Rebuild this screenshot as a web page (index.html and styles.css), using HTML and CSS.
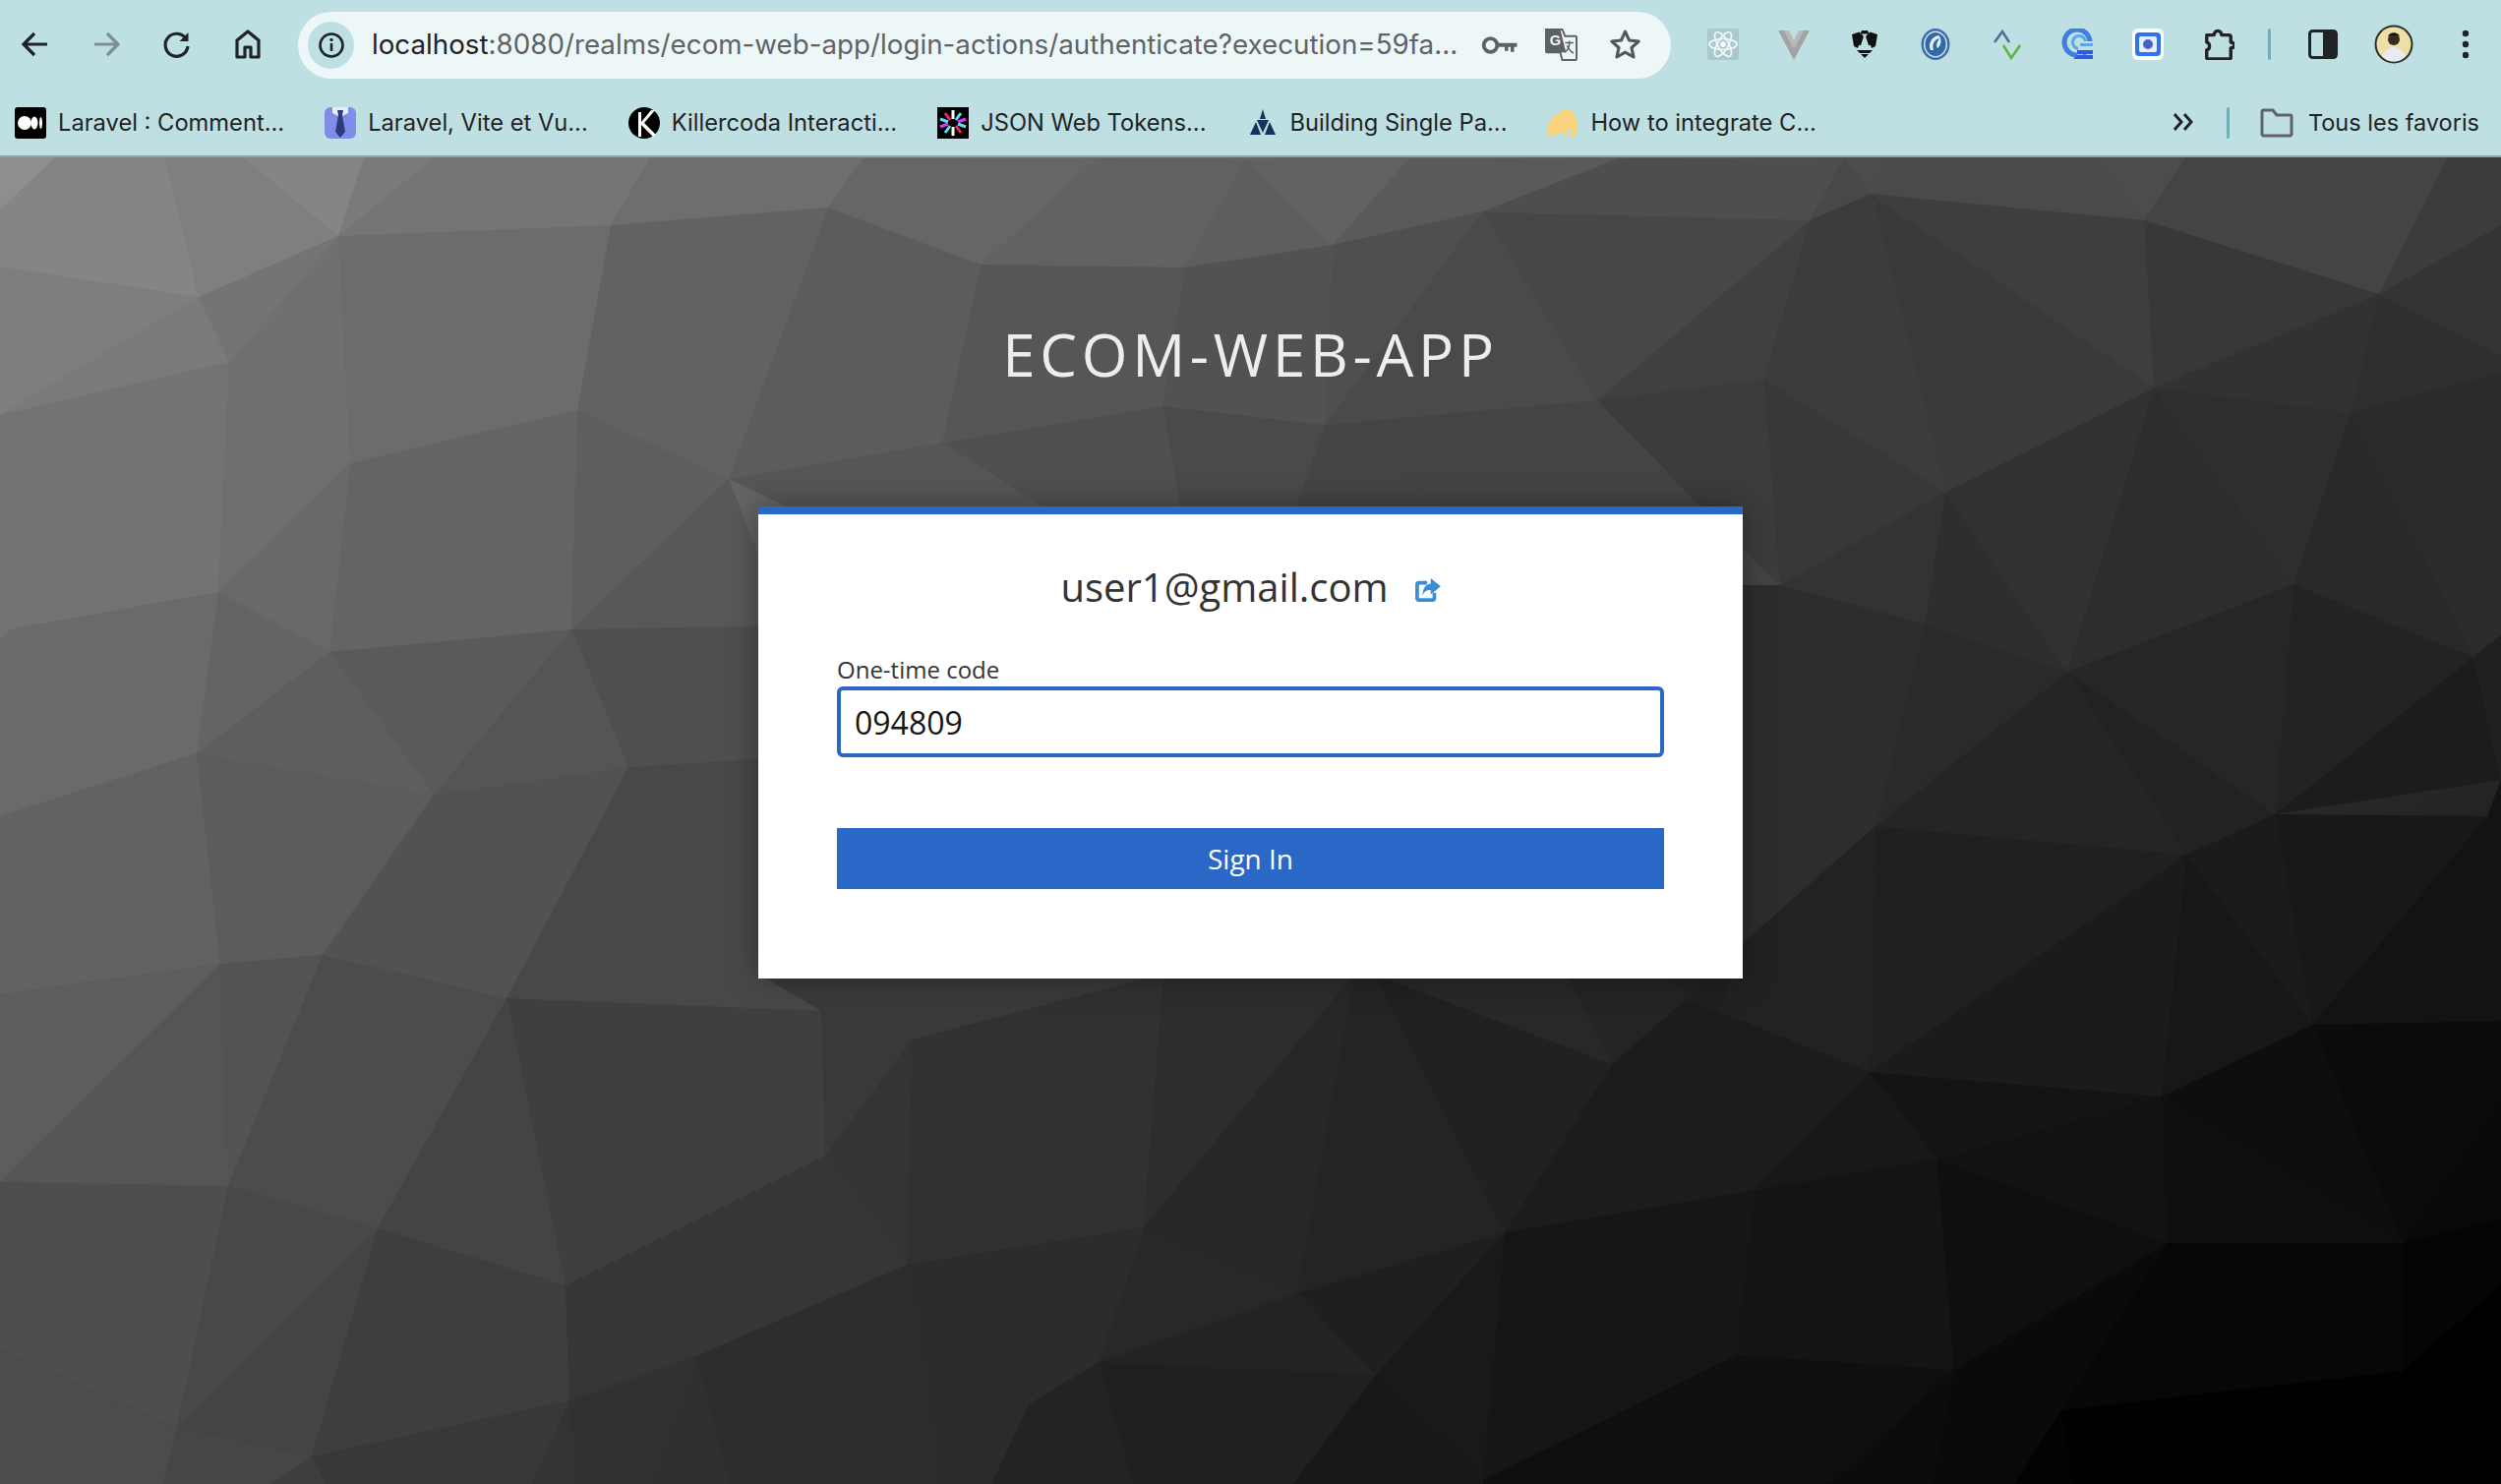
FILE: index.html
```html
<!DOCTYPE html>
<html lang="en">
<head>
<meta charset="utf-8">
<title>Sign in to ecom-web-app</title>
<link rel="stylesheet" href="styles.css">
</head>
<body>
<div class="browser">
  <header class="chrome">
    <div class="toolbar">
      <div class="nav">
        <svg class="ic" viewBox="0 0 32 32"><path d="M28 16H6M15 5 4 16l11 11" fill="none" stroke="#1f2326" stroke-width="3.200"/></svg>
        <svg class="ic" viewBox="0 0 32 32"><path d="M4 16h22M17 5l11 11-11 11" fill="none" stroke="#7d8f92" stroke-width="3.200"/></svg>
        <svg class="ic" viewBox="0 0 32 32"><path d="M24.500 9.500A11.500 11.500 0 1 0 27 18" fill="none" stroke="#1f2326" stroke-width="3.200"/><path d="M27.500 4v9h-9z" fill="#1f2326"/></svg>
        <svg class="ic" viewBox="0 0 32 32"><path d="M16 3 5 12v17h8v-10h6v10h8V12z" fill="none" stroke="#1f2326" stroke-width="3.200" stroke-linejoin="round"/></svg>
      </div>
      <div class="omnibox">
        <span class="site-info"><svg class="info" viewBox="0 0 28 28"><circle cx="14" cy="14" r="11.500" fill="none" stroke="#1f2326" stroke-width="2.600"/><path d="M14 12v8" stroke="#1f2326" stroke-width="2.600"/><circle cx="14" cy="8.400" r="1.700" fill="#1f2326"/></svg></span>
        <span class="url"><b class="host">localhost</b>:8080/realms/ecom-web-app/login-actions/authenticate?execution=59fa...</span>
        <span class="omni-actions">
          <svg class="key" viewBox="0 0 36 20"><circle cx="9" cy="10" r="6.800" fill="none" stroke="#5d6164" stroke-width="3.800"/><path d="M15 7.800h21v4h-3v5h-3.500v-5h-2.500v4h-3.500v-4h-8.500z" fill="#5d6164"/></svg>
          <svg class="gt" viewBox="0 0 34 34"><path d="M1 1h17l3 7h11a1.500 1.500 0 0 1 1 1v23a1.500 1.500 0 0 1-1 1H18l-2-8H2a1 1 0 0 1-1-1z" fill="#eef7f8" stroke="#5d6164" stroke-width="2"/><path d="M1 1h15l6 24H2a1 1 0 0 1-1-1z" fill="#5d6164"/><text x="5" y="18" class="gt-g">G</text><path d="M21 15h9M25.500 13v2c0 5-2 8-5 10M23 18c1.500 3 3.500 6 7 8" fill="none" stroke="#5d6164" stroke-width="1.500"/></svg>
          <svg class="star" viewBox="0 0 32 32"><path d="m16 3 3.900 8.600 9.400 1-7 6.300 2 9.200-8.300-4.700-8.300 4.700 2-9.200-7-6.300 9.400-1z" fill="none" stroke="#53575a" stroke-width="3" stroke-linejoin="round"/></svg>
        </span>
      </div>
      <div class="extensions">
        <svg class="ext" viewBox="0 0 32 32"><rect width="32" height="32" rx="2" fill="#aac9cc"/><g fill="none" stroke="#f2f6f6" stroke-width="1.700"><ellipse cx="16" cy="16" rx="14" ry="5.500"/><ellipse cx="16" cy="16" rx="14" ry="5.500" transform="rotate(60 16 16)"/><ellipse cx="16" cy="16" rx="14" ry="5.500" transform="rotate(120 16 16)"/></g><circle cx="16" cy="16" r="3" fill="#f2f6f6"/></svg>
        <svg class="ext" viewBox="0 0 32 32"><path d="M0 2h11l5 10 5-10h11L16 32z" fill="#a0a4a4"/><path d="M11 2h10l-5 10z" fill="#bee0e2"/><path d="M6 2h5l5 10 5-10h5L16 21z" fill="#b6baba"/></svg>
        <svg class="ext" viewBox="0 0 32 32"><path d="M13 2h6l1.500 3.500h-9zM10.500 3.500 3 6l2 12 4 2 1-3h2L15 8zM21.500 3.500 29 6l-2 12-4 2-1-3h-2L17 8zM8 22h16l-3 3h-10zM12 26h8l-4 4z" fill="#111"/></svg>
        <svg class="ext" viewBox="0 0 32 32"><ellipse cx="16" cy="16" rx="14.500" ry="16" fill="#3c6ea8"/><ellipse cx="16" cy="16" rx="12" ry="13.500" fill="#d4e2f0"/><ellipse cx="16" cy="16" rx="10.500" ry="12" fill="#2f69a8"/><path d="M11 22c-3-6 1-14 8-15 4 3 3 10-1 13-2-3 0-7 2-10-5 1-8 6-6 12z" fill="#e6eef7"/></svg>
        <svg class="ext" viewBox="0 0 32 32"><path d="M4 14 12 3l7 11" fill="none" stroke="#4f6f96" stroke-width="2.500"/><path d="M13 17l8 13 9-13" fill="none" stroke="#5fb23c" stroke-width="2.500"/></svg>
        <svg class="ext" viewBox="0 0 32 32"><circle cx="16" cy="14" r="13" fill="none" stroke="#3f7fe0" stroke-width="5"/><circle cx="16" cy="14" r="13" fill="none" stroke="#8ecdf2" stroke-width="2" stroke-dasharray="20 70"/><circle cx="18" cy="14" r="6.500" fill="none" stroke="#59a6ec" stroke-width="3"/><path d="M17 13h15v9H17z" fill="#bee0e2"/><path d="M19 15h13v3H19z" fill="#59a6ec"/><path d="M16 22h16v4H16zM16 27h16v4H12z" fill="#3358d8"/></svg>
        <svg class="ext" viewBox="0 0 32 32"><rect width="32" height="32" rx="6" fill="#fff"/><rect x="3" y="4" width="26" height="24" rx="4" fill="#2f74ee"/><rect x="7" y="8" width="18" height="16" rx="2" fill="#e5efff"/><circle cx="16" cy="16" r="5" fill="#4b5fc9"/></svg>
        <svg class="ext" viewBox="0 0 34 34"><path d="M4 7h8c0-6 8-6 8 0h8a2 2 0 0 1 2 2v6c5 0 5 6 0 6v10a2 2 0 0 1-2 2H6a2 2 0 0 1-2-2v-8c4 0 4-8 0-8V9a2 2 0 0 1 2-2z" fill="none" stroke="#1f2326" stroke-width="3.600" stroke-linejoin="round"/></svg>
        <span class="rule rule-top"></span>
        <svg class="panel" viewBox="0 0 30 30"><rect x="1.500" y="1.500" width="27" height="27" rx="3" fill="none" stroke="#1f2326" stroke-width="3"/><rect x="15" y="2" width="13" height="26" fill="#1f2326"/></svg>
        <svg class="avatar" viewBox="0 0 40 40"><defs><clipPath id="av"><circle cx="20" cy="20" r="17.500"/></clipPath></defs><circle cx="20" cy="20" r="19.500" fill="#2a2c2e"/><g clip-path="url(#av)"><rect width="40" height="40" fill="#eedfa6"/><path d="M7 40c0-10 6-17 13-17s13 7 13 17z" fill="#e7ebf4"/><circle cx="20" cy="15" r="6" fill="#3a2a24"/><path d="M14 12c2-5 10-5 12 0l-2-1h-8z" fill="#111"/></g></svg>
        <svg class="dots" viewBox="0 0 8 32"><circle cx="4" cy="5" r="3.200" fill="#1f2326"/><circle cx="4" cy="16" r="3.200" fill="#1f2326"/><circle cx="4" cy="27" r="3.200" fill="#1f2326"/></svg>
      </div>
    </div>
    <nav class="bookmarks">
      <div class="bm-list">
        <a class="bm"><svg class="fav" viewBox="0 0 32 32"><rect width="32" height="32" rx="3" fill="#000"/><ellipse cx="10" cy="16" rx="7" ry="7" fill="#fff"/><ellipse cx="20" cy="16" rx="3.500" ry="6.500" fill="#fff"/><ellipse cx="26.500" cy="16" rx="1.500" ry="6" fill="#fff"/></svg>Laravel : Comment...</a>
        <a class="bm"><svg class="fav" viewBox="0 0 32 32"><rect width="32" height="32" rx="6" fill="#7f8ce8"/><path d="M8 0h16v6l-8 4-8-4z" fill="#e8ecfa"/><path d="M13 3h6l-1 5 3 17-5 6-5-6 3-17z" fill="#2f3a7c"/></svg>Laravel, Vite et Vu...</a>
        <a class="bm"><svg class="fav" viewBox="0 0 32 32"><circle cx="16" cy="16" r="16" fill="#000"/><path d="M10 5h3v10L23 3h4L16 16l12 12-3 2-12-12v12h-3z" fill="#fff"/></svg>Killercoda Interacti...</a>
        <a class="bm"><svg class="fav" viewBox="0 0 32 32"><rect width="32" height="32" fill="#000"/><g stroke-width="3" stroke-linecap="butt"><path d="M16 3v9M16 20v9" stroke="#fff"/><path d="M8 6l5 7M19 19l5 7" stroke="#f0246f"/><path d="M24 6l-5 7M13 19l-5 7" stroke="#5fe3e8"/><path d="M3 12l8 3M21 17l8 3" stroke="#5fe3e8"/><path d="M29 12l-8 3M11 17l-8 3" stroke="#d63aff"/></g></svg>JSON Web Tokens...</a>
        <a class="bm"><svg class="fav" viewBox="0 0 32 32"><path d="M16 2l3 10h-6zM10 13h12l-6 13zM9 15l5 13H3zM23 15l-5 13h11z" fill="#16335c"/></svg>Building Single Pa...</a>
        <a class="bm"><svg class="fav" viewBox="0 0 32 32"><path d="M1 30c-1-10 1-20 10-23 4-6 14-6 17 1 3 5 3 12 2 18l-2 4h-3l-1-9-3 3v6h-3v-4H9v4H6l-1-5-2 5z" fill="#fbd47e"/></svg>How to integrate C...</a>
      </div>
      <div class="bm-end">
        <svg class="chev" viewBox="0 0 22 20"><path d="M2 2l7 8-7 8M12 2l7 8-7 8" fill="none" stroke="#1f2326" stroke-width="3"/></svg>
        <span class="rule rule-bm"></span>
        <svg class="folder" viewBox="0 0 34 30"><path d="M2 3.500A1.500 1.500 0 0 1 3.500 2H13l4 5h13.500A1.500 1.500 0 0 1 32 8.500v18a1.500 1.500 0 0 1-1.500 1.500h-27A1.500 1.500 0 0 1 2 26.500z" fill="none" stroke="#5f6366" stroke-width="3" stroke-linejoin="round"/></svg>
        <span class="bm-all">Tous les favoris</span>
      </div>
    </nav>
  </header>

  <main class="stage">
    <svg class="mesh" viewBox="0 160 2543 1349" preserveAspectRatio="none" aria-hidden="true">
      <defs><linearGradient id="base" x1="0" y1="0" x2="1" y2="1"><stop offset="0" stop-color="#8a8a8a"/><stop offset="1" stop-color="#000"/></linearGradient></defs>
      <rect x="0" y="160" width="2543" height="1349" fill="url(#base)"/>
      <polygon fill="#8e8e8e" points="0,160 56,160 0,214"/>
      <polygon fill="#858585" points="56,160 167,160 202,302 0,271 0,214"/>
      <polygon fill="#7f7f7f" points="167,160 247,160 344,240 202,302"/>
      <polygon fill="#858585" points="247,160 370,160 344,240"/>
      <polygon fill="#7a7a7a" points="370,160 441,160 344,240"/>
      <polygon fill="#757575" points="441,160 661,160 621,229 344,240"/>
      <polygon fill="#6e6e6e" points="661,160 877,161 842,211 621,229"/>
      <polygon fill="#7e7e7e" points="0,271 202,302 0,422"/>
      <polygon fill="#7a7a7a" points="202,302 233,368 0,422"/>
      <polygon fill="#747474" points="202,302 344,240 233,368"/>
      <polygon fill="#707070" points="344,240 356,471 233,368"/>
      <polygon fill="#6c6c6c" points="344,240 621,229 587,417 356,471"/>
      <polygon fill="#626262" points="621,229 842,211 741,487 587,417"/>
      <polygon fill="#737373" points="0,422 233,368 222,602 10,640 0,650"/>
      <polygon fill="#6e6e6e" points="233,368 356,471 222,602"/>
      <polygon fill="#646464" points="356,471 587,417 581,640 335,663"/>
      <polygon fill="#696969" points="356,471 335,663 222,602"/>
      <polygon fill="#5e5e5e" points="587,417 741,487 581,640"/>
      <polygon fill="#585858" points="741,487 800,640 581,640"/>
      <polygon fill="#4f4f4f" points="581,640 800,636 800,770 639,780"/>
      <polygon fill="#555555" points="581,640 639,780 441,808"/>
      <polygon fill="#5a5a5a" points="335,663 581,640 441,808"/>
      <polygon fill="#5e5e5e" points="335,663 441,808 200,766"/>
      <polygon fill="#646464" points="222,602 335,663 200,766"/>
      <polygon fill="#6a6a6a" points="0,650 10,640 222,602 200,766 0,830"/>
      <polygon fill="#626262" points="0,830 200,766 224,980 0,1011"/>
      <polygon fill="#5c5c5c" points="200,766 441,808 328,971 224,980"/>
      <polygon fill="#525252" points="441,808 639,780 515,1015 328,971"/>
      <polygon fill="#484848" points="639,780 800,770 800,1000 835,1028 515,1015"/>
      <polygon fill="#5d5d5d" points="0,1011 224,980 0,1202"/>
      <polygon fill="#555555" points="224,980 232,1206 0,1202"/>
      <polygon fill="#535353" points="224,980 328,971 232,1206"/>
      <polygon fill="#4c4c4c" points="328,971 515,1015 384,1249 232,1206"/>
      <polygon fill="#444444" points="515,1015 575,1307 384,1249"/>
      <polygon fill="#3f3f3f" points="515,1015 835,1028 839,1175 575,1307"/>
      <polygon fill="#4e4e4e" points="0,1202 232,1206 180,1452 0,1371"/>
      <polygon fill="#484848" points="232,1206 384,1249 180,1452"/>
      <polygon fill="#444444" points="384,1249 317,1481 180,1452"/>
      <polygon fill="#3e3e3e" points="384,1249 575,1307 579,1424 317,1481"/>
      <polygon fill="#363636" points="575,1307 839,1175 922,1286 708,1379 579,1424"/>
      <polygon fill="#4c4c4c" points="0,1371 180,1452 166,1509 0,1509"/>
      <polygon fill="#464646" points="180,1452 317,1481 275,1509 166,1509"/>
      <polygon fill="#3e3e3e" points="317,1481 332,1509 275,1509"/>
      <polygon fill="#383838" points="317,1481 579,1424 541,1509 332,1509"/>
      <polygon fill="#333333" points="579,1424 587,1509 541,1509"/>
      <polygon fill="#313131" points="579,1424 708,1379 663,1509 587,1509"/>
      <polygon fill="#303030" points="708,1379 742,1509 663,1509"/>
      <polygon fill="#2d2d2d" points="708,1379 922,1286 955,1509 742,1509"/>
      <polygon fill="#666666" points="842,211 877,161 1116,161 997,269"/>
      <polygon fill="#5c5c5c" points="842,211 997,269 958,450 741,487"/>
      <polygon fill="#626262" points="1116,161 1267,161 1205,272 997,269"/>
      <polygon fill="#565656" points="997,269 1205,272 1182,413 958,450"/>
      <polygon fill="#5e5e5e" points="1267,161 1355,249 1205,272"/>
      <polygon fill="#626262" points="1267,161 1433,161 1355,249"/>
      <polygon fill="#5a5a5a" points="1433,161 1646,161 1507,215 1355,249"/>
      <polygon fill="#525252" points="1205,272 1355,249 1347,432 1182,413"/>
      <polygon fill="#4f4f4f" points="1355,249 1507,215 1347,432"/>
      <polygon fill="#4a4a4a" points="1507,215 1624,407 1347,432"/>
      <polygon fill="#4e4e4e" points="1507,215 1646,161 1875,160 1840,224"/>
      <polygon fill="#474747" points="1507,215 1840,224 1624,407"/>
      <polygon fill="#404040" points="1840,224 1793,385 1624,407"/>
      <polygon fill="#565656" points="741,487 958,450 1060,515 800,515"/>
      <polygon fill="#505050" points="958,450 1182,413 1200,515 1060,515"/>
      <polygon fill="#4a4a4a" points="1182,413 1347,432 1318,515 1200,515"/>
      <polygon fill="#454545" points="1347,432 1461,515 1318,515"/>
      <polygon fill="#444444" points="1347,432 1624,407 1729,515 1461,515"/>
      <polygon fill="#3c3c3c" points="1624,407 1793,385 1810,595 1729,515"/>
      <polygon fill="#4c4c4c" points="1875,160 1919,160 1902,197"/>
      <polygon fill="#484848" points="1875,160 1902,197 1840,224"/>
      <polygon fill="#4a4a4a" points="1919,160 2129,160 2180,224 1902,197"/>
      <polygon fill="#4c4c4c" points="2129,160 2222,160 2180,224"/>
      <polygon fill="#444444" points="2222,160 2489,160 2419,299 2180,224"/>
      <polygon fill="#3c3c3c" points="2489,160 2543,160 2543,229 2419,299"/>
      <polygon fill="#3e3e3e" points="1902,197 2180,224 2190,394"/>
      <polygon fill="#3a3a3a" points="1902,197 2190,394 1978,500"/>
      <polygon fill="#3c3c3c" points="1902,197 1978,500 1793,385"/>
      <polygon fill="#3c3c3c" points="1902,197 1793,385 1840,224"/>
      <polygon fill="#383838" points="2180,224 2419,299 2190,394"/>
      <polygon fill="#323232" points="2419,299 2390,419 2190,394"/>
      <polygon fill="#343434" points="2419,299 2543,229 2543,362"/>
      <polygon fill="#2f2f2f" points="2419,299 2543,362 2543,379 2390,419"/>
      <polygon fill="#383838" points="1793,385 1978,500 1810,595"/>
      <polygon fill="#333333" points="1978,500 1957,634 1810,595"/>
      <polygon fill="#2e2e2e" points="1978,500 2102,683 1957,634"/>
      <polygon fill="#323232" points="1978,500 2190,394 2102,683"/>
      <polygon fill="#2d2d2d" points="2190,394 2332,594 2102,683"/>
      <polygon fill="#2f2f2f" points="2190,394 2390,419 2332,594"/>
      <polygon fill="#292929" points="2390,419 2515,668 2332,594"/>
      <polygon fill="#2b2b2b" points="2390,419 2543,379 2543,646 2515,668"/>
      <polygon fill="#2d2d2d" points="1771,595 1810,595 1957,634 1907,840 1771,960"/>
      <polygon fill="#2a2a2a" points="1957,634 2102,683 1907,840"/>
      <polygon fill="#252525" points="2102,683 2223,869 1907,840"/>
      <polygon fill="#222222" points="2102,683 2313,828 2223,869"/>
      <polygon fill="#262626" points="2102,683 2332,594 2313,828"/>
      <polygon fill="#232323" points="2332,594 2515,668 2313,828"/>
      <polygon fill="#1c1c1c" points="2515,668 2543,793 2313,828"/>
      <polygon fill="#202020" points="2515,668 2543,646 2543,793"/>
      <polygon fill="#181818" points="2313,828 2529,830 2351,1042"/>
      <polygon fill="#131313" points="2529,830 2543,793 2543,1038 2351,1042"/>
      <polygon fill="#1b1b1b" points="2223,869 2313,828 2351,1042"/>
      <polygon fill="#202020" points="1907,840 2223,869 1901,1090"/>
      <polygon fill="#1b1b1b" points="2223,869 2198,1115 1901,1090"/>
      <polygon fill="#171717" points="2223,869 2351,1042 2198,1115"/>
      <polygon fill="#141414" points="1901,1090 2198,1115 1969,1178"/>
      <polygon fill="#121212" points="1969,1178 2198,1115 2203,1264"/>
      <polygon fill="#0f0f0f" points="2198,1115 2443,1264 2203,1264"/>
      <polygon fill="#0e0e0e" points="2198,1115 2351,1042 2443,1264"/>
      <polygon fill="#0b0b0b" points="2351,1042 2543,1038 2543,1120 2443,1264"/>
      <polygon fill="#090909" points="2543,1120 2543,1239 2443,1264"/>
      <polygon fill="#070707" points="2203,1264 2443,1264 2443,1394 2096,1434"/>
      <polygon fill="#050505" points="2443,1264 2543,1239 2543,1306 2443,1394"/>
      <polygon fill="#000000" points="2443,1394 2543,1306 2543,1509 2423,1509"/>
      <polygon fill="#010101" points="2096,1434 2443,1394 2423,1509 2107,1509"/>
      <polygon fill="#0a0a0a" points="1987,1393 2203,1264 2096,1434"/>
      <polygon fill="#0f0f0f" points="1969,1178 2203,1264 1987,1393"/>
      <polygon fill="#141414" points="1784,1210 1969,1178 1987,1393 1765,1378"/>
      <polygon fill="#181818" points="1784,1210 1901,1090 1969,1178"/>
      <polygon fill="#1c1c1c" points="1750,1029 1901,1090 1784,1210"/>
      <polygon fill="#222222" points="1771,960 1907,840 1901,1090 1750,1029"/>
      <polygon fill="#0f0f0f" points="1765,1378 1987,1393 1861,1509 1508,1505"/>
      <polygon fill="#0c0c0c" points="1987,1393 1965,1509 1861,1509"/>
      <polygon fill="#0a0a0a" points="1987,1393 2096,1434 2048,1509 1965,1509"/>
      <polygon fill="#030303" points="2096,1434 2107,1509 2048,1509"/>
      <polygon fill="#101010" points="1508,1505 1861,1509 1508,1509"/>
      <polygon fill="#393939" points="835,1028 927,1057 839,1175"/>
      <polygon fill="#3a3a3a" points="771,990 1183,990 927,1057 835,1028"/>
      <polygon fill="#343434" points="839,1175 927,1057 922,1286"/>
      <polygon fill="#313131" points="927,1057 1183,990 1163,1248 922,1286"/>
      <polygon fill="#2d2d2d" points="1183,990 1377,990 1163,1248"/>
      <polygon fill="#272727" points="1377,990 1319,1315 1163,1248"/>
      <polygon fill="#242424" points="1377,990 1396,990 1530,1253 1319,1315"/>
      <polygon fill="#212121" points="1396,990 1639,1082 1530,1253"/>
      <polygon fill="#282828" points="1396,990 1592,990 1639,1082"/>
      <polygon fill="#242424" points="1592,990 1692,990 1714,1016 1639,1082"/>
      <polygon fill="#222222" points="1692,990 1771,960 1771,995 1714,1016"/>
      <polygon fill="#202020" points="1714,1016 1771,960 1750,1029"/>
      <polygon fill="#1c1c1c" points="1639,1082 1714,1016 1750,1029 1784,1210 1530,1253"/>
      <polygon fill="#161616" points="1530,1253 1784,1210 1765,1378 1508,1505"/>
      <polygon fill="#1f1f1f" points="1319,1315 1530,1253 1399,1398"/>
      <polygon fill="#191919" points="1399,1398 1530,1253 1508,1505"/>
      <polygon fill="#181818" points="1399,1398 1508,1505 1508,1509 1314,1509"/>
      <polygon fill="#232323" points="1117,1385 1319,1315 1399,1398"/>
      <polygon fill="#282828" points="1163,1248 1319,1315 1117,1385"/>
      <polygon fill="#2c2c2c" points="922,1286 1163,1248 1117,1385 1046,1428 955,1509"/>
      <polygon fill="#202020" points="1117,1385 1399,1398 1314,1509 1152,1509"/>
      <polygon fill="#232323" points="1046,1428 1117,1385 1152,1509 1008,1509"/>
      <polygon fill="#2b2b2b" points="1046,1428 1008,1509 955,1509"/>
    </svg>
    <div class="login">
      <h1 class="realm">ECOM-WEB-APP</h1>
      <section class="card">
        <div class="user">
          <span class="user-name">user1@gmail.com</span>
          <a class="user-reset" aria-label="Restart login"><svg class="share" viewBox="0 0 28 26"><path d="M13 5H4a2 2 0 0 0-2 2v15a2 2 0 0 0 2 2h15a2 2 0 0 0 2-2v-6" fill="none" stroke="#3b8bd6" stroke-width="4"/><path d="M17 0l11 9-11 9v-5c-5 0-8 2-9 7 0-9 3-13 9-14z" fill="#3b8bd6"/></svg></a>
        </div>
        <form class="form">
          <label class="label" for="otp">One-time code</label>
          <input class="input" id="otp" type="text" value="094809">
          <button class="submit" type="button">Sign In</button>
        </form>
      </section>
    </div>
  </main>
</div>
</body>
</html>
```
FILE: styles.css
```css
* { box-sizing: border-box; }
html, body { margin: 0; height: 100%; }
body { font-family: "Open Sans", "Liberation Sans", sans-serif; background: #000; overflow: hidden; }

.browser { display: flex; flex-direction: column; height: 1509px; }

/* Browser chrome */
.chrome { height: 160px; flex: none; background: #bee0e2; border-bottom: 2px solid #8fa6aa; font-family: Inter, "Liberation Sans", sans-serif; color: #1f2326; }
.toolbar { height: 90px; display: flex; align-items: center; }
.nav { width: 303px; flex: none; display: flex; align-items: center; gap: 40px; padding-left: 20px; }
.ic { width: 32px; height: 32px; flex: none; }
.omnibox { width: 1396px; height: 68px; flex: none; margin-top: 1px; display: flex; align-items: center; background: #eef7f8; border-radius: 34px; padding-left: 10px; }
.site-info { width: 47px; height: 48px; flex: none; border-radius: 50%; background: #bee0e2; display: flex; align-items: center; justify-content: center; }
.info { width: 28px; height: 28px; }
.url { flex: 1; min-width: 0; margin: 0 0 2px 18px; font-size: 27.75px; color: #5f6366; white-space: nowrap; }
.host { font-weight: 400; color: #1f2326; }
.omni-actions { flex: none; display: flex; align-items: center; width: 216px; padding-left: 23px; }
.key { width: 37px; height: 20px; }
.gt { width: 33px; height: 33px; margin-left: 28px; }
.gt-g { font: 700 15px "Liberation Sans", sans-serif; fill: #eef7f8; }
.star { width: 33px; height: 33px; margin-left: 32px; }
.extensions { flex: 1; display: flex; align-items: center; padding-left: 37px; }
.ext { width: 32px; height: 32px; flex: none; margin-right: 40px; }
.rule { display: block; width: 3px; background: #72aeb8; border-radius: 2px; flex: none; }
.rule-top { height: 32px; margin-left: -6px; }
.panel { width: 30px; height: 30px; margin-left: 38px; flex: none; }
.avatar { width: 40px; height: 40px; margin-left: 37px; flex: none; }
.dots { width: 8px; height: 32px; margin-left: 49px; flex: none; }

.bookmarks { height: 68px; display: flex; align-items: flex-start; justify-content: space-between; padding: 18px 22px 0 15px; }
.bm-list { display: flex; gap: 41px; }
.bm { display: flex; align-items: center; gap: 12px; height: 32px; font-size: 23.7px; white-space: nowrap; }
.fav { width: 32px; height: 32px; flex: none; margin-top: 2px; }
.bm-end { display: flex; align-items: center; height: 32px; }
.chev { width: 22px; height: 20px; }
.rule-bm { height: 32px; margin: 2px 0 0 33px; }
.folder { width: 34px; height: 30px; margin: 2px 0 0 31px; }
.bm-all { font-size: 23.5px; margin-left: 15px; white-space: nowrap; }

/* Stage: mesh and login share one grid cell */
.stage { flex: 1; display: grid; grid-template: 1fr / 1fr; min-height: 0; }
.mesh { grid-area: 1 / 1; width: 100%; height: 100%; display: block; }
.login { grid-area: 1 / 1; display: flex; flex-direction: column; align-items: center; padding-top: 150px; }
.realm { margin: 0; height: 205px; font-size: 60px; line-height: 100px; font-weight: 400; letter-spacing: 4.7px; color: #ededed; }

.card { width: 1001px; height: 480px; background: #fff; border-top: 8px solid #2a68c8; box-shadow: 0 0 30px rgba(0,0,0,.35); padding: 44px 80px 0; }
.user { display: flex; justify-content: center; align-items: center; gap: 27px; height: 60px; color: #333; }
.user-name { font-size: 40px; line-height: 60px; }
.share { width: 26px; height: 24px; display: block; margin-top: 6px; }

.form { display: flex; flex-direction: column; }
.label { margin-top: 36px; font-size: 24px; line-height: 35px; color: #333; }
.input { height: 72px; width: 100%; border: 4px solid #2a68c8; border-radius: 6px; outline: 0; padding: 0 14px; font: 400 32px "Open Sans", sans-serif; color: #151515; background: #fff; }
.submit { margin-top: 72px; height: 62px; border: 0; background: #2a68c8; color: #fff; font: 400 28px "Open Sans", sans-serif; padding: 0; }
```
